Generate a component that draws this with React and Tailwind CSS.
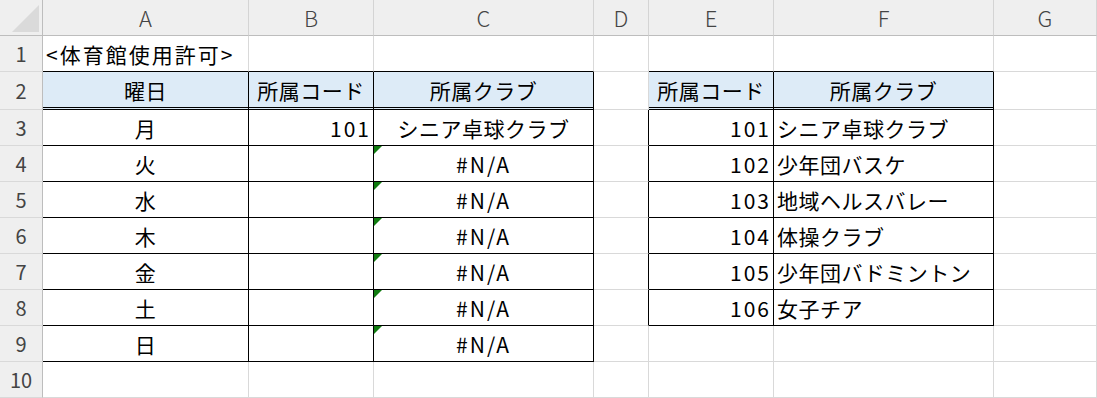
import React from "react";

const COLS = ["A", "B", "C", "D", "E", "F", "G"];

const days = ["月", "火", "水", "木", "金", "土", "日"];
const clubs = [
  ["101", "シニア卓球クラブ"],
  ["102", "少年団バスケ"],
  ["103", "地域ヘルスバレー"],
  ["104", "体操クラブ"],
  ["105", "少年団バドミントン"],
  ["106", "女子チア"],
];

const gridCols = "grid-cols-[43px_206px_125px_220px_55px_125px_220px_1fr]";

const Cell = ({ children, align = "center", right, bottom, bg, flag, className = "" }) => {
  const justify =
    align === "right" ? "justify-end pr-[2px]" : align === "left" ? "justify-start pl-[3px]" : "justify-center";
  const rb = right === "black" ? "border-r border-r-black" : "border-r border-r-[#d9d9d9]";
  const bb =
    bottom === "double"
      ? "border-b-[3px] border-double border-b-black"
      : bottom === "black"
      ? "border-b border-b-black"
      : "border-b border-b-[#d9d9d9]";
  // latin strings (codes, errors) set wider than the kana
  const latin = typeof children === "string" && /^[\x20-\x7e]+$/.test(children);
  return (
    <div className={`relative flex items-center pt-px ${justify} ${rb} ${bb} ${bg || "bg-white"} ${className}`}>
      {flag && (
        <span className="absolute left-0 top-0 w-0 h-0 border-t-[8px] border-r-[8px] border-t-[#107c10] border-r-transparent" />
      )}
      <span className={`whitespace-nowrap leading-none ${latin ? "tracking-[2px]" : "tracking-[0.5px]"}`}>
        {children}
      </span>
    </div>
  );
};

const RowHead = ({ n }) => (
  <div className="flex items-center justify-center bg-[#efefef] text-[#444] text-[20px] border-r border-r-[#bdbdbd] border-b border-b-[#d9d9d9]">
    {n}
  </div>
);

export default function App() {
  const blue = "bg-[#ddebf7]";
  const rows = [];

  rows.push(
    <React.Fragment key="r1">
      <RowHead n={1} />
      <Cell align="left" bottom="black" className="z-10 pt-[3px] [&>span]:tracking-[2px]">
        {"<体育館使用許可>"}
      </Cell>
      <Cell bottom="black" />
      <Cell bottom="black" />
      <Cell />
      <Cell bottom="black" />
      <Cell bottom="black" />
      <Cell />
    </React.Fragment>
  );

  rows.push(
    <React.Fragment key="r2">
      <RowHead n={2} />
      <Cell right="black" bottom="double" bg={blue}>曜日</Cell>
      <Cell right="black" bottom="double" bg={blue}>所属コード</Cell>
      <Cell right="black" bottom="double" bg={blue}>所属クラブ</Cell>
      <Cell />
      <Cell right="black" bottom="double" bg={blue}>所属コード</Cell>
      <Cell right="black" bottom="double" bg={blue}>所属クラブ</Cell>
      <Cell />
    </React.Fragment>
  );

  for (let i = 0; i < 8; i++) {
    const r = i + 3;
    const inLeft = i < 7;
    const club = clubs[i];
    const lb = inLeft ? "black" : undefined;
    const cb = club ? "black" : undefined;
    rows.push(
      <React.Fragment key={r}>
        <RowHead n={r} />
        <Cell right={lb} bottom={lb}>{inLeft ? days[i] : ""}</Cell>
        <Cell right={lb} bottom={lb} align="right">{i === 0 ? "101" : ""}</Cell>
        <Cell right={lb} bottom={lb} flag={inLeft && i > 0}>
          {inLeft ? (i === 0 ? "シニア卓球クラブ" : "#N/A") : ""}
        </Cell>
        <Cell right={cb} />
        <Cell right={cb} bottom={cb} align="right">{club ? club[0] : ""}</Cell>
        <Cell right={cb} bottom={cb} align="left">{club ? club[1] : ""}</Cell>
        <Cell />
      </React.Fragment>
    );
  }

  return (
    <div
      className="w-[1097px] h-[398px] overflow-hidden bg-white text-[21px] text-black"
      style={{ fontFamily: '"Noto Sans CJK JP", "Noto Sans", sans-serif' }}
    >
      <div className={`grid ${gridCols} grid-rows-[36px_36px_38px_repeat(8,36px)]`}>
        <div className="relative bg-[#efefef] border-r border-r-[#bdbdbd] border-b border-b-[#bdbdbd]">
          <span className="absolute right-[3px] bottom-[3px] w-0 h-0 border-b-[27px] border-l-[27px] border-b-[#dadada] border-l-transparent" />
        </div>
        {COLS.map((c) => (
          <div
            key={c}
            className="flex items-center justify-center bg-[#efefef] text-[#444] text-[22px] font-light border-r border-r-[#d4d4d4] border-b border-b-[#bdbdbd]"
          >
            {c}
          </div>
        ))}
        {rows}
      </div>
    </div>
  );
}
